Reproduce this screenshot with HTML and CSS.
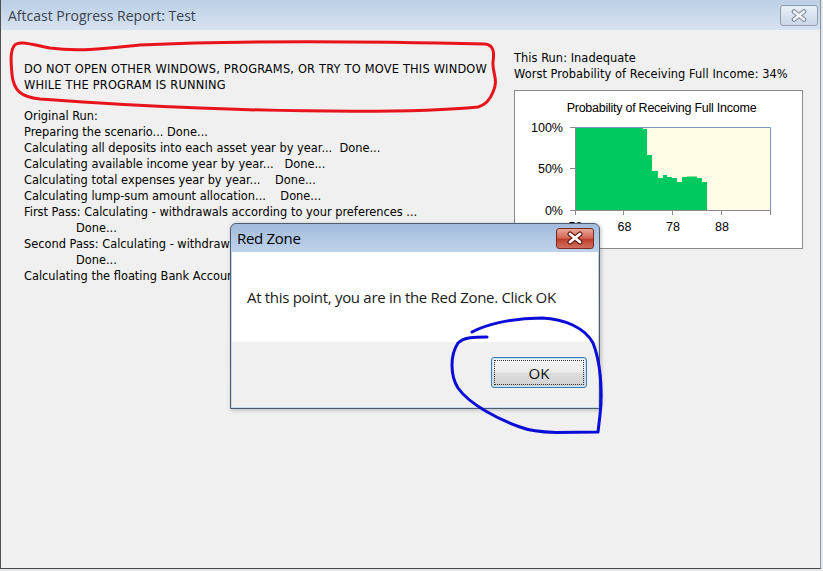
FILE: index.html
```html
<!DOCTYPE html>
<html>
<head>
<meta charset="utf-8">
<title>Aftcast Progress Report: Test</title>
<link rel="stylesheet" href="styles.css">
</head>
<body>
<div class="window">
  <div class="titlebar">
    <span class="title">Aftcast Progress Report: Test</span>
    <span class="win-close">
      <svg width="16" height="13" viewBox="0 0 16 13"><path d="M3 2.5 L13 10.5 M13 2.5 L3 10.5" stroke="#7d8a9b" stroke-width="4.6" stroke-linecap="round"/><path d="M3 2.5 L13 10.5 M13 2.5 L3 10.5" stroke="#f4f6f9" stroke-width="2.4" stroke-linecap="round"/></svg>
    </span>
  </div>
  <div class="client">
    <div class="left">
      <div class="warning">DO NOT OPEN OTHER WINDOWS, PROGRAMS, OR TRY TO MOVE THIS WINDOW<br>WHILE THE PROGRAM IS RUNNING</div>
      <div class="log">
        <div class="line">Original Run:</div>
        <div class="line">Preparing the scenario... Done...</div>
        <div class="line">Calculating all deposits into each asset year by year...  Done...</div>
        <div class="line">Calculating available income year by year...   Done...</div>
        <div class="line">Calculating total expenses year by year...    Done...</div>
        <div class="line">Calculating lump-sum amount allocation...    Done...</div>
        <div class="line">First Pass: Calculating - withdrawals according to your preferences ...</div>
        <div class="line indent">Done...</div>
        <div class="line">Second Pass: Calculating - withdrawals according to your preferences ...</div>
        <div class="line indent">Done...</div>
        <div class="line">Calculating the floating Bank Account...</div>
      </div>
    </div>
    <div class="right">
      <div class="status">This Run: Inadequate<br>Worst Probability of Receiving Full Income: 34%</div>
      <div class="chart">
        <svg width="287" height="157" viewBox="0 0 287 157">
          <text class="ch-title" x="146.5" y="21" text-anchor="middle">Probability of Receiving Full Income</text>
          <rect x="60" y="36" width="195" height="83" fill="#fffde6"/>
          <polygon fill="#00c95f" points="61,119 61,36 128,36 128,38 132,38 132,64 137,64 137,80 143,80 143,87 148,87 148,84 152,84 152,86 157,86 157,87 162,87 162,91 167,91 167,86 172,86 172,85.5 182,85.5 182,87 187,87 187,91 192,91 192,119"/>
          <path d="M60.5 36.5 H255.5 V119" stroke="#7f95c4" stroke-width="1" fill="none"/>
          <path d="M60.5 36 V119.5 H255.5" stroke="#8a8a8a" stroke-width="1" fill="none"/>
          <path d="M55 36.5 H60 M55 77.5 H60 M55 119.5 H60 M60.5 119 V124 M108.5 119 V124 M157.5 119 V124 M206.5 119 V124 M255.5 119 V124" stroke="#8a8a8a" stroke-width="1"/>
          <text class="ch-axis" x="48" y="41" text-anchor="end">100%</text>
          <text class="ch-axis" x="48" y="82" text-anchor="end">50%</text>
          <text class="ch-axis" x="48" y="124" text-anchor="end">0%</text>
          <text class="ch-axis" x="60.5" y="140" text-anchor="middle">58</text>
          <text class="ch-axis" x="109.5" y="140" text-anchor="middle">68</text>
          <text class="ch-axis" x="158" y="140" text-anchor="middle">78</text>
          <text class="ch-axis" x="207" y="140" text-anchor="middle">88</text>
        </svg>
      </div>
    </div>
  </div>
</div>

<div class="dialog">
  <div class="dlg-title">
    <span class="dlg-caption">Red Zone</span>
    <span class="dlg-close">
      <svg width="18" height="14" viewBox="0 0 18 14"><path d="M4 3 L14 11 M14 3 L4 11" stroke="#6a1a10" stroke-width="5" stroke-linecap="round"/><path d="M4 3 L14 11 M14 3 L4 11" stroke="#ffffff" stroke-width="2.8" stroke-linecap="round"/></svg>
    </span>
  </div>
  <div class="dlg-body">At this point, you are in the Red Zone. Click OK</div>
  <div class="dlg-footer">
    <div class="ok-btn"><span class="ok-focus">OK</span></div>
  </div>
</div>

<svg class="ink" width="823" height="571" viewBox="0 0 823 571">
  <path d="M14 46 C18 40 30 44 50 48 C80 52 110 48 140 45 C250 40 400 42 485 44 C495 45 494 55 493 62 C492 72 499 80 493 92 C490 100 485 105 478 107 C420 113 300 112 200 108 C140 106 80 102 40 99 C20 97 14 90 12 75 C11 62 10 52 14 46 Z" fill="none" stroke="#e8141c" stroke-width="3" stroke-linejoin="round"/>
  <path d="M472 332 C485 325 510 318 542 318 C565 319 585 328 593 343 C600 360 603 390 600 415 L598 432 L556 432.5 C540 432 530 431 520 427 C500 420 470 405 458 388 C450 375 450 355 458 343 C464 337 475 337 487 337" fill="none" stroke="#0c0cd8" stroke-width="3" stroke-linecap="round" stroke-linejoin="round"/>
</svg>
</body>
</html>
```

FILE: styles.css
```css
html, body {
  margin: 0;
  padding: 0;
}

body {
  width: 823px;
  height: 571px;
  overflow: hidden;
  position: relative;
  background: #e6e9ec;
  font-family: "DejaVu Sans", "Liberation Sans", sans-serif;
  font-size: 11.4px;
  color: #000;
}

.window {
  width: 821px;
  height: 569px;
  box-sizing: border-box;
  border-left: 1px solid #4f4f4f;
  border-right: 1px solid #8c96a0;
  border-bottom: 1px solid #4a4a4a;
  background: #f0f0f0;
  display: flex;
  flex-direction: column;
}

.titlebar {
  height: 30px;
  flex: none;
  display: flex;
  align-items: center;
  padding: 0 2px 0 7px;
  background: linear-gradient(#bccfe5, #d7e3f1);
}

.title {
  font-family: "Open Sans", sans-serif;
  font-size: 14px;
  color: #3a4350;
}

.win-close {
  margin-left: auto;
  width: 38px;
  height: 21px;
  box-sizing: border-box;
  border: 1px solid #8e9db2;
  border-radius: 3px;
  background: linear-gradient(#e8eef6, #cad7e7);
  display: flex;
  align-items: center;
  justify-content: center;
}

.client {
  flex: 1;
  display: grid;
  grid-template-columns: 490px 289px;
  align-items: start;
  padding: 20px 0 0 23px;
}

.left {
  padding-top: 11px;
}

.warning {
  line-height: 16px;
  letter-spacing: 0.2px;
}

.log {
  margin-top: 15px;
  line-height: 16px;
}

.line {
  white-space: pre;
}

.indent {
  padding-left: 52px;
}

.status {
  line-height: 16px;
  letter-spacing: 0.05px;
}

.chart {
  margin-top: 8px;
  width: 289px;
  height: 159px;
  box-sizing: border-box;
  border: 1px solid #8a8a8a;
  background: #ffffff;
}

.chart svg {
  display: block;
}

.ch-title {
  font-family: "Liberation Sans", Arial, sans-serif;
  font-size: 12.5px;
  letter-spacing: -0.25px;
  fill: #000;
}

.ch-axis {
  font-family: "Liberation Sans", Arial, sans-serif;
  font-size: 12.5px;
  fill: #000;
}

.dialog {
  position: absolute;
  left: 230px;
  top: 223px;
  width: 370px;
  height: 186px;
  box-sizing: border-box;
  border: 1px solid #4e5c6e;
  border-radius: 6px 6px 0 0;
  padding: 0 1px 1px;
  background: linear-gradient(#a2bcdc, #bed2ea 28px, #c9daee);
  display: flex;
  flex-direction: column;
  box-shadow: 1px 1px 4px rgba(0, 0, 0, 0.25);
}

.dlg-title {
  height: 28px;
  flex: none;
  display: flex;
  align-items: center;
  padding: 0 4px 0 5px;
}

.dlg-caption {
  font-family: "Open Sans", sans-serif;
  font-size: 15px;
  letter-spacing: -0.3px;
  color: #000;
}

.dlg-close {
  margin-left: auto;
  width: 38px;
  height: 21px;
  box-sizing: border-box;
  border: 1px solid #7a2a20;
  border-radius: 3px;
  background: linear-gradient(#e9a799, #d46a58 45%, #c0402f 55%, #d0705e);
  display: flex;
  align-items: center;
  justify-content: center;
}

.dlg-body {
  height: 90px;
  flex: none;
  background: #ffffff;
  display: flex;
  align-items: center;
  padding-left: 15px;
  font-family: "Open Sans", sans-serif;
  font-size: 15px;
  letter-spacing: -0.3px;
  color: #1a1a1a;
}

.dlg-footer {
  flex: 1;
  background: #f0f0f0;
  display: flex;
  justify-content: flex-end;
  align-items: flex-start;
  padding: 15px 11px 0 0;
}

.ok-btn {
  width: 96px;
  height: 31px;
  box-sizing: border-box;
  border: 1px solid #3c7fb1;
  border-radius: 3px;
  padding: 2px;
  display: flex;
  background: linear-gradient(#f5f5f5, #ececec 48%, #dddddd 52%, #d0d0d0);
  box-shadow: inset 0 0 0 1px #bfe3f7;
}

.ok-focus {
  flex: 1;
  border: 1px dotted #333;
  display: flex;
  align-items: center;
  justify-content: center;
  font-family: "Open Sans", sans-serif;
  font-size: 15px;
  color: #111;
}

.ink {
  position: absolute;
  left: 0;
  top: 0;
  pointer-events: none;
}
```
